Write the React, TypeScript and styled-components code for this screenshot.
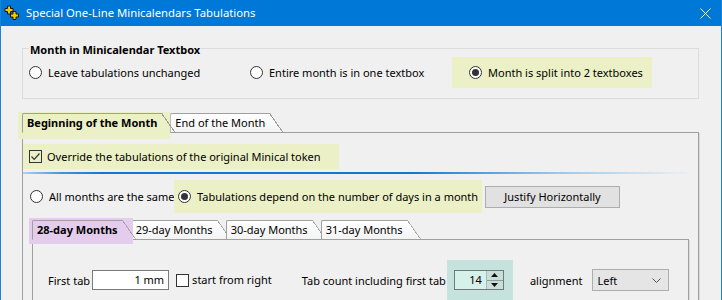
import React from "react";
import styled, { createGlobalStyle } from "styled-components";

const GlobalStyle = createGlobalStyle`
  html, body {
    margin: 0;
    padding: 0;
    background: #f0f0f0;
  }
  body {
    font-family: "Noto Sans", "Liberation Sans", sans-serif;
    font-size: 11px;
    color: #000;
  }
`;

const App = () => {
  return (
    <>
      <GlobalStyle />
      <Window>
        <TitleBar>
          <AppIcon />
          <Title>Special One-Line Minicalendars Tabulations</Title>
          <CloseIcon />
        </TitleBar>
        <Body>
          <GroupBox>
            <Legend>Month in Minicalendar Textbox</Legend>
            <Row $height={31}>
              <Cell $width={221}>
                <Radio label="Leave tabulations unchanged" />
              </Cell>
              <Cell $width={202}>
                <Radio label="Entire month is in one textbox" />
              </Cell>
              <Highlight $color="#ebf0c6" $width={200} $pad={17}>
                <Radio label="Month is split into 2 textboxes" checked />
              </Highlight>
            </Row>
          </GroupBox>

          <TabStrip $top={14}>
            <Marked $color="#ebf0c6" $inset="-1px 6px -6px -4px">
              <Tab $selected>Beginning of the Month</Tab>
            </Marked>
            <Tab>End of the Month</Tab>
            <StripFill />
          </TabStrip>
          <Pane>
            <Highlight $color="#ebf0c6" $width={316} $pad={6} $height={25} $top={11}>
              <Check label="Override the tabulations of the original Minical token" checked gap={5} />
            </Highlight>
            <BlueLine />
            <Row $height={33} $top={6} $pad={7}>
              <Cell $width={144}>
                <Radio label="All months are the same" />
              </Cell>
              <Highlight $color="#ebf0c6" $width={308} $pad={4}>
                <Radio label="Tabulations depend on the number of days in a month" checked />
              </Highlight>
              <Button>Justify Horizontally</Button>
            </Row>

            <InnerArea>
              <TabStrip $top={7}>
                <Marked $color="#e4cdec" $inset="-2px 4px -4px -3px">
                  <Tab $selected>28-day Months</Tab>
                </Marked>
                <Tab>29-day Months</Tab>
                <Tab>30-day Months</Tab>
                <Tab>31-day Months</Tab>
                <StripFill />
              </TabStrip>
              <Pane>
                <Row $height={40} $top={20} $pad={15}>
                  <span>First tab</span>
                  <TextBox>1 mm</TextBox>
                  <Spacer $w={7} />
                  <Check label="start from right" gap={3} white />
                  <Spacer $w={30} />
                  <span>Tab count including first tab</span>
                  <Highlight $color="#c5e3dc" $width={66} $pad={7} $height={40} $left={1}>
                    <Spinner>
                      <SpinValue>14</SpinValue>
                      <SpinButtons>
                        <SpinHalf>
                          <svg width="7" height="4" viewBox="0 0 7 4">
                            <path d="M0 4 L3.5 0 L7 4 Z" fill="#111" />
                          </svg>
                        </SpinHalf>
                        <SpinHalf>
                          <svg width="7" height="4" viewBox="0 0 7 4">
                            <path d="M0 0 L3.5 4 L7 0 Z" fill="#111" />
                          </svg>
                        </SpinHalf>
                      </SpinButtons>
                    </Spinner>
                  </Highlight>
                  <Spacer $w={17} />
                  <span>alignment</span>
                  <Select>
                    <span>Left</span>
                    <svg width="9" height="5" viewBox="0 0 9 5">
                      <polyline points="0.5,0.5 4.5,4.5 8.5,0.5" fill="none" stroke="#555" strokeWidth="1" />
                    </svg>
                  </Select>
                </Row>
              </Pane>
            </InnerArea>
          </Pane>
        </Body>
      </Window>
    </>
  );
};

export default App;

const AppIcon = () => (
  <svg width="16" height="16" viewBox="0 0 16 16">
    <path
      d="M9 6.5 h3 v2.5 h2.5 v3 h-2.5 v2.5 h-3 v-2.5 h-2.5 v-3 h2.5 z"
      fill="#f7c600"
      stroke="#1a1a1a"
      strokeWidth="1"
    />
    <path
      d="M3.5 1 h3 v2.5 h2.5 v3 h-2.5 v2.5 h-3 v-2.5 h-2.5 v-3 h2.5 z"
      fill="#f7c600"
      stroke="#1a1a1a"
      strokeWidth="1"
    />
  </svg>
);

const CloseIcon = () => (
  <CloseBox>
    <svg width="11" height="11" viewBox="0 0 11 11">
      <path d="M0.5 0.5 L10.5 10.5 M10.5 0.5 L0.5 10.5" stroke="#fff" strokeWidth="1" />
    </svg>
  </CloseBox>
);

type RadioProps = { label: string; checked?: boolean };
const Radio = ({ label, checked }: RadioProps) => (
  <OptionItem $gap={6}>
    <RadioCircle>{checked && <RadioDot />}</RadioCircle>
    <span>{label}</span>
  </OptionItem>
);

type CheckProps = { label: string; checked?: boolean; gap: number; white?: boolean };
const Check = ({ label, checked, gap, white }: CheckProps) => (
  <OptionItem $gap={gap}>
    <CheckSquare $white={white}>
      {checked && (
        <svg width="11" height="11" viewBox="0 0 11 11">
          <polyline points="1.5,5.5 4.2,8.3 9.5,2.5" fill="none" stroke="#333" strokeWidth="1.2" />
        </svg>
      )}
    </CheckSquare>
    <span>{label}</span>
  </OptionItem>
);

const Window = styled.div`
  width: 722px;
  height: 300px;
  box-sizing: border-box;
  overflow: hidden;
  border-left: 1px solid #1883d7;
  border-right: 1px solid #1883d7;
  background: #f0f0f0;
  display: flex;
  flex-direction: column;
`;

const TitleBar = styled.div`
  flex: none;
  height: 26px;
  margin: 0 -1px;
  padding: 0 11px 0 4px;
  background: #0078d7;
  color: #fff;
  display: flex;
  align-items: center;
  gap: 6px;

  svg {
    display: block;
  }
`;

const Title = styled.div`
  font-size: 11.3px;
  line-height: 16px;
`;

const CloseBox = styled.div`
  margin-left: auto;
`;

const Body = styled.div`
  padding: 22px 22px 0 21px;
  display: flex;
  flex-direction: column;
`;

const GroupBox = styled.div`
  height: 51px;
  box-sizing: border-box;
  border: 1px solid #dcdcdc;
  display: flex;
  flex-direction: column;
`;

const Legend = styled.div`
  align-self: flex-start;
  margin: -7px 0 0 6px;
  padding: 0 1px;
  background: #f0f0f0;
  font-weight: 700;
  line-height: 16px;
`;

const Row = styled.div<{ $height: number; $top?: number; $pad?: number }>`
  display: flex;
  align-items: center;
  height: ${(p) => p.$height}px;
  margin-top: ${(p) => p.$top ?? -1}px;
  padding-left: ${(p) => p.$pad ?? 6}px;
  white-space: nowrap;
`;

const Cell = styled.div<{ $width: number }>`
  width: ${(p) => p.$width}px;
  flex: none;
`;

const Spacer = styled.div<{ $w: number }>`
  width: ${(p) => p.$w}px;
  flex: none;
`;

const Highlight = styled.div<{
  $color: string;
  $width: number;
  $pad: number;
  $height?: number;
  $top?: number;
  $left?: number;
}>`
  flex: none;
  box-sizing: border-box;
  width: ${(p) => p.$width}px;
  height: ${(p) => (p.$height ? `${p.$height}px` : "100%")};
  margin-top: ${(p) => p.$top ?? 0}px;
  margin-left: ${(p) => p.$left ?? 0}px;
  padding-left: ${(p) => p.$pad}px;
  background: ${(p) => p.$color};
  display: flex;
  align-items: center;
`;

const OptionItem = styled.label<{ $gap: number }>`
  display: flex;
  align-items: center;
  gap: ${(p) => p.$gap}px;
  line-height: 16px;
  white-space: nowrap;
`;

const RadioCircle = styled.span`
  width: 13px;
  height: 13px;
  box-sizing: border-box;
  border: 1px solid #333;
  border-radius: 50%;
  background: #fff;
  display: flex;
  align-items: center;
  justify-content: center;
  flex: none;
`;

const RadioDot = styled.span`
  width: 7px;
  height: 7px;
  border-radius: 50%;
  background: #333;
`;

const CheckSquare = styled.span<{ $white?: boolean }>`
  width: 13px;
  height: 13px;
  box-sizing: border-box;
  border: 1px solid #333;
  background: ${(p) => (p.$white ? "#fff" : "transparent")};
  display: flex;
  align-items: center;
  justify-content: center;
  flex: none;
`;

const TabStrip = styled.div<{ $top: number }>`
  display: flex;
  align-items: flex-end;
  height: 20px;
  margin-top: ${(p) => p.$top}px;

  & > * + * {
    margin-left: -6px;
  }
`;

const Marked = styled.div<{ $color: string; $inset: string }>`
  position: relative;
  z-index: 2;
  isolation: isolate;
  display: flex;

  &::before {
    content: "";
    position: absolute;
    inset: ${(p) => p.$inset};
    background: ${(p) => p.$color};
    z-index: -1;
  }
`;

const Tab = styled.div<{ $selected?: boolean }>`
  position: relative;
  z-index: 1;
  height: 20px;
  box-sizing: border-box;
  padding: 0 19px 0 4px;
  border-left: 1px solid #a0a0a0;
  border-top: 1px solid #a0a0a0;
  border-bottom: 1px solid ${(p) => (p.$selected ? "transparent" : "#a0a0a0")};
  border-top-left-radius: 2px;
  background: ${(p) => (p.$selected ? "transparent" : "linear-gradient(#ffffff, #f3f3f3)")};
  clip-path: polygon(0 0, calc(100% - 14px) 0, 100% 100%, 0 100%);
  font-weight: ${(p) => (p.$selected ? 700 : 400)};
  line-height: 18px;
  white-space: nowrap;

  &::after {
    content: "";
    position: absolute;
    top: -1px;
    bottom: -1px;
    right: 0;
    width: 14px;
    background: linear-gradient(
      to top right,
      transparent calc(50% - 1.1px),
      #9a9a9a calc(50% - 1.1px),
      #9a9a9a 50%,
      transparent 50%
    );
  }
`;

const StripFill = styled.div`
  flex: 1;
  align-self: stretch;
  border-bottom: 1px solid #a0a0a0;
`;

const Pane = styled.div`
  display: flex;
  flex-direction: column;
  min-height: 180px;
  border: 1px solid #a0a0a0;
  border-top: none;
  box-shadow: 1px 0 0 #dadada;
`;

const BlueLine = styled.div`
  height: 2px;
  margin: 3px 5px 0 0;
  background: linear-gradient(
    to right,
    #a9d0f1 0%,
    #3f93dd 6%,
    #0c79d8 12%,
    #0c79d8 58%,
    #9dc8ec 80%,
    #f0f0f0 100%
  );
`;

const Button = styled.div`
  flex: none;
  margin-left: 3px;
  width: 135px;
  height: 22px;
  box-sizing: border-box;
  border: 1px solid #adadad;
  background: #e1e1e1;
  display: flex;
  align-items: center;
  justify-content: center;
`;

const InnerArea = styled.div`
  display: flex;
  flex-direction: column;
  margin: 0 9px;
`;

const TextBox = styled.div`
  flex: none;
  margin-left: 2px;
  width: 77px;
  height: 20px;
  box-sizing: border-box;
  border: 1px solid #7a7a7a;
  background: #fff;
  padding-right: 4px;
  text-align: right;
  line-height: 18px;
`;

const Spinner = styled.div`
  width: 50px;
  height: 20px;
  box-sizing: border-box;
  border: 1px solid #6f7a78;
  background: #d6f0ea;
  display: flex;
`;

const SpinValue = styled.div`
  flex: 1;
  text-align: right;
  padding-right: 4px;
  line-height: 18px;
`;

const SpinButtons = styled.div`
  width: 16px;
  display: flex;
  flex-direction: column;
  border-left: 1px solid #a9bcb8;
  background: #c9ddd9;
`;

const SpinHalf = styled.div`
  flex: 1;
  display: flex;
  align-items: center;
  justify-content: center;

  & + & {
    border-top: 1px solid #8c9c99;
  }

  svg {
    display: block;
  }
`;

const Select = styled.div`
  flex: none;
  margin-left: 9px;
  width: 77px;
  height: 22px;
  box-sizing: border-box;
  border: 1px solid #adadad;
  background: #e5e5e5;
  padding: 0 7px 0 5px;
  display: flex;
  align-items: center;
  justify-content: space-between;

  svg {
    display: block;
  }
`;
